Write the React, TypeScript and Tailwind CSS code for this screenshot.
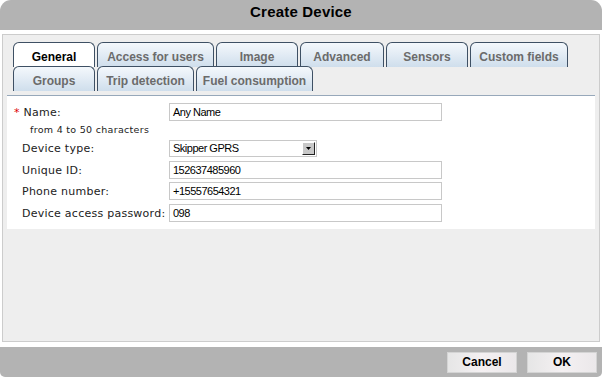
import * as React from "react";

const TAB_ROW_1 = [
  { label: "General", w: "w-[82px]", active: true },
  { label: "Access for users", w: "w-[117px]" },
  { label: "Image", w: "w-[82px]" },
  { label: "Advanced", w: "w-[84px]" },
  { label: "Sensors", w: "w-[82px]" },
  { label: "Custom fields", w: "w-[98px]" },
];

const TAB_ROW_2 = [
  { label: "Groups", w: "w-[82px]" },
  { label: "Trip detection", w: "w-[97px]" },
  { label: "Fuel consumption", w: "w-[117px]" },
];

type Tab = { label: string; w: string; active?: boolean };

function TabButton({ tab }: { tab: Tab }) {
  return (
    <div
      className={
        "flex h-[25px] shrink-0 items-center justify-center rounded-t-[6px] border border-b-0 border-[#3e5064] pt-[3px] text-[12px] font-bold " +
        tab.w +
        (tab.active
          ? " bg-white text-black"
          : " bg-gradient-to-b from-[#f4f8fc] to-[#cfdeec] text-[#6b6b6b]")
      }
    >
      {tab.label}
    </div>
  );
}

function FieldRow(props: {
  label: string;
  required?: boolean;
  children: React.ReactNode;
  className?: string;
}) {
  return (
    <div className={"flex items-center " + (props.className ?? "")}>
      <div className="w-[162px] shrink-0 pl-[7px] pt-[2px] font-['DejaVu_Sans',sans-serif] text-[11px] tracking-[0.25px] text-[#222]">
        {props.required ? (
          <span className="text-[#d00]">* </span>
        ) : (
          <span className="inline-block w-[8px]" />
        )}
        {props.label}
      </div>
      {props.children}
    </div>
  );
}

function TextInput({ value }: { value: string }) {
  return (
    <div className="flex h-full w-[273px] items-center border border-[#c8c8c8] bg-white pl-[3px] text-[11px] tracking-[-0.5px] text-black">
      {value}
    </div>
  );
}

export default function App() {
  return (
    <div className="flex h-[377px] w-[602px] flex-col bg-white font-['Liberation_Sans',Arial,sans-serif]">
      <div className="flex h-[30px] shrink-0 items-center justify-center rounded-t-[11px] bg-[#b3b3b3] pb-[5px] text-[15px] font-bold tracking-[0.2px] text-black">
        Create Device
      </div>

      <div className="mx-[2px] mt-[4px] flex flex-1 flex-col border border-[#cccccc] bg-[#eeeeee] px-[4px] pt-[7px]">
        <div className="flex flex-col pl-[6px]">
          <div className="flex gap-[2px]">
            {TAB_ROW_1.map((tab) => (
              <TabButton key={tab.label} tab={tab} />
            ))}
          </div>
          <div className="-mt-px flex gap-[2px]">
            {TAB_ROW_2.map((tab) => (
              <TabButton key={tab.label} tab={tab} />
            ))}
          </div>
        </div>

        <div className="mt-[4px] flex h-[134px] flex-col border-t border-[#97a8ba] bg-white pt-[7px]">
          <FieldRow label="Name:" required className="h-[18px]">
            <TextInput value="Any Name" />
          </FieldRow>
          <div className="flex h-[19px] items-center pl-[23px] font-['DejaVu_Sans',sans-serif] text-[9.5px] tracking-[0.3px] text-[#222]">
            from 4 to 50 characters
          </div>
          <FieldRow label="Device type:" className="h-[17px]">
            <div className="flex h-full w-[148px] items-center justify-between border border-[#c8c8c8] bg-white pl-[3px] text-[11px] tracking-[-0.5px] text-black">
              <span>Skipper GPRS</span>
              <span className="mr-px flex h-[13px] w-[13px] items-center justify-center border border-t-[#fff] border-l-[#fff] border-r-[#222] border-b-[#222] bg-[#c8c8c8]">
                <svg width="5" height="3" viewBox="0 0 5 3">
                  <path d="M0 0h5L2.5 3z" fill="#000" />
                </svg>
              </span>
            </div>
          </FieldRow>
          <FieldRow label="Unique ID:" className="mt-[4px] h-[18px]">
            <TextInput value="152637485960" />
          </FieldRow>
          <FieldRow label="Phone number:" className="mt-[3px] h-[18px]">
            <TextInput value="+15557654321" />
          </FieldRow>
          <FieldRow label="Device access password:" className="mt-[4px] h-[18px]">
            <TextInput value="098" />
          </FieldRow>
        </div>
      </div>

      <div className="mt-[5px] flex h-[30px] shrink-0 items-center justify-end gap-[10px] rounded-b-[5px] bg-[#b3b3b3] pr-[5px]">
        <button className="h-[21px] w-[70px] border border-[#d4d4d4] bg-gradient-to-r from-[#e6e6e6] via-[#f4f0f2] to-[#ebe8ea] text-[12px] font-bold text-black">
          Cancel
        </button>
        <button className="h-[21px] w-[70px] border border-[#d4d4d4] bg-gradient-to-r from-[#e6e6e6] via-[#f4f0f2] to-[#ebe8ea] text-[12px] font-bold text-black">
          OK
        </button>
      </div>
    </div>
  );
}
